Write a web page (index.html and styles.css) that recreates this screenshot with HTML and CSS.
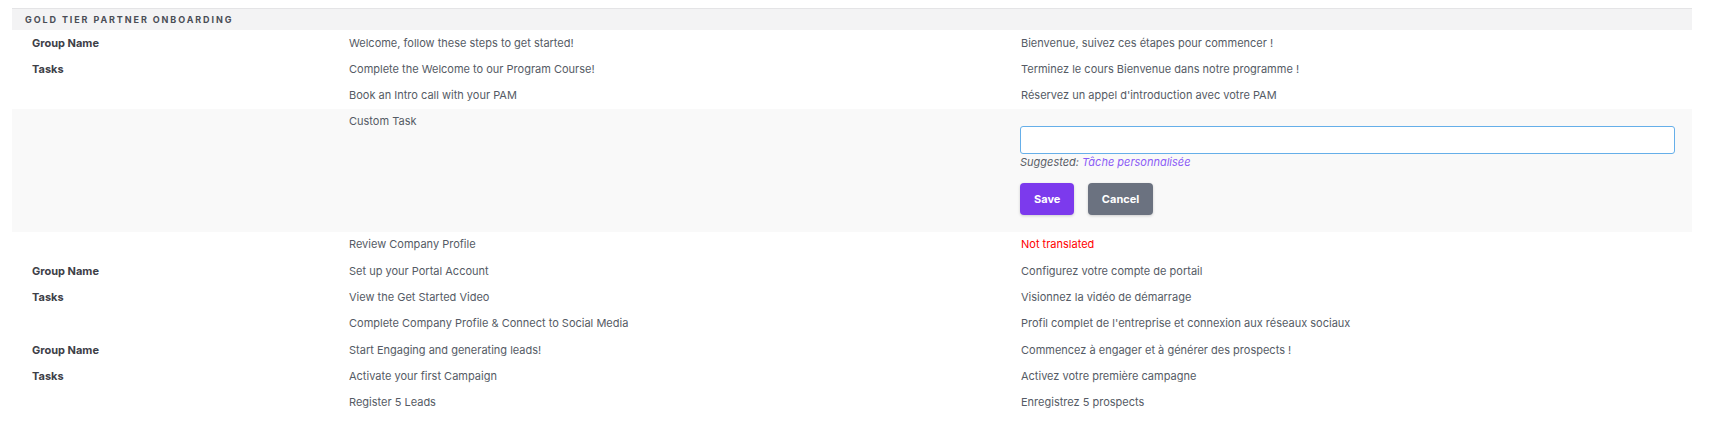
FILE: index.html
```html
<!DOCTYPE html>
<html lang="en">
<head>
<meta charset="utf-8">
<title>Gold Tier Partner Onboarding</title>
<link rel="stylesheet" href="styles.css">
</head>
<body>
<div class="section">
  <div class="section-head">GOLD TIER PARTNER ONBOARDING</div>

  <div class="row">
    <div class="cell label">Group Name</div>
    <div class="cell">Welcome, follow these steps to get started!</div>
    <div class="cell">Bienvenue, suivez ces étapes pour commencer !</div>
  </div>
  <div class="row">
    <div class="cell label">Tasks</div>
    <div class="cell">Complete the Welcome to our Program Course!</div>
    <div class="cell">Terminez le cours Bienvenue dans notre programme !</div>
  </div>
  <div class="row">
    <div class="cell label"></div>
    <div class="cell">Book an Intro call with your PAM</div>
    <div class="cell">Réservez un appel d'introduction avec votre PAM</div>
  </div>

  <div class="row row-edit">
    <div class="cell label"></div>
    <div class="cell">Custom Task</div>
    <div class="cell edit-cell">
      <input class="edit-input" type="text" value="">
      <div class="suggest">Suggested: <span class="suggest-link">Tâche personnalisée</span></div>
      <div class="actions">
        <button class="btn btn-save" type="button">Save</button>
        <button class="btn btn-cancel" type="button">Cancel</button>
      </div>
    </div>
  </div>

  <div class="row">
    <div class="cell label"></div>
    <div class="cell">Review Company Profile</div>
    <div class="cell missing">Not translated</div>
  </div>
  <div class="row">
    <div class="cell label">Group Name</div>
    <div class="cell">Set up your Portal Account</div>
    <div class="cell">Configurez votre compte de portail</div>
  </div>
  <div class="row">
    <div class="cell label">Tasks</div>
    <div class="cell">View the Get Started Video</div>
    <div class="cell">Visionnez la vidéo de démarrage</div>
  </div>
  <div class="row">
    <div class="cell label"></div>
    <div class="cell">Complete Company Profile &amp; Connect to Social Media</div>
    <div class="cell">Profil complet de l'entreprise et connexion aux réseaux sociaux</div>
  </div>
  <div class="row">
    <div class="cell label">Group Name</div>
    <div class="cell">Start Engaging and generating leads!</div>
    <div class="cell">Commencez à engager et à générer des prospects !</div>
  </div>
  <div class="row">
    <div class="cell label">Tasks</div>
    <div class="cell">Activate your first Campaign</div>
    <div class="cell">Activez votre première campagne</div>
  </div>
  <div class="row">
    <div class="cell label"></div>
    <div class="cell">Register 5 Leads</div>
    <div class="cell">Enregistrez 5 prospects</div>
  </div>
</div>
</body>
</html>
```

FILE: styles.css
```css
html, body {
  margin: 0;
  padding: 0;
  background: #ffffff;
}

body {
  font-family: Inter, "Noto Sans", "Liberation Sans", sans-serif;
  font-size: 11px;
  color: #555b65;
}

.section {
  margin: 8px 21px 0 12px;
}

.section-head {
  border-top: 1px solid #e4e4e6;
  background: #f3f3f4;
  height: 21px;
  line-height: 21px;
  padding-left: 13px;
  font-size: 9px;
  font-weight: 700;
  letter-spacing: 1.9px;
  color: #4a4d56;
}

.row {
  display: grid;
  grid-template-columns: 336px 672px 1fr;
}

.cell {
  padding: 3.5px 0 4.83px 1px;
  line-height: 18px;
  min-height: 18px;
}

.cell.label {
  padding-left: 20px;
  font-weight: 700;
  color: #3d4047;
}

.row-edit {
  background: #f9f9f9;
}

.edit-cell {
  padding: 17px 0 17px 0;
}

.edit-input {
  display: block;
  box-sizing: border-box;
  width: calc(100% - 17px);
  height: 28px;
  margin: 0;
  padding: 0 8px;
  border: 1px solid #66afe9;
  border-radius: 3px;
  background: #ffffff;
  font-family: inherit;
  font-size: 11px;
  outline: none;
}

.suggest {
  margin-top: 0.5px;
  line-height: 16px;
  font-style: italic;
  color: #5a5e66;
}

.suggest-link {
  color: #8b5cf6;
}

.actions {
  display: flex;
  gap: 13.5px;
  margin-top: 13px;
}

.btn {
  height: 31.4px;
  padding: 0 14px;
  border: none;
  border-radius: 4px;
  font-family: inherit;
  font-size: 11px;
  font-weight: 700;
  color: #ffffff;
  box-shadow: 0 1px 3px rgba(0, 0, 0, 0.18);
  cursor: pointer;
}

.btn-save {
  background: #7c3aed;
}

.btn-cancel {
  background: #6b7280;
}

.missing {
  color: #ff0000;
}
```
